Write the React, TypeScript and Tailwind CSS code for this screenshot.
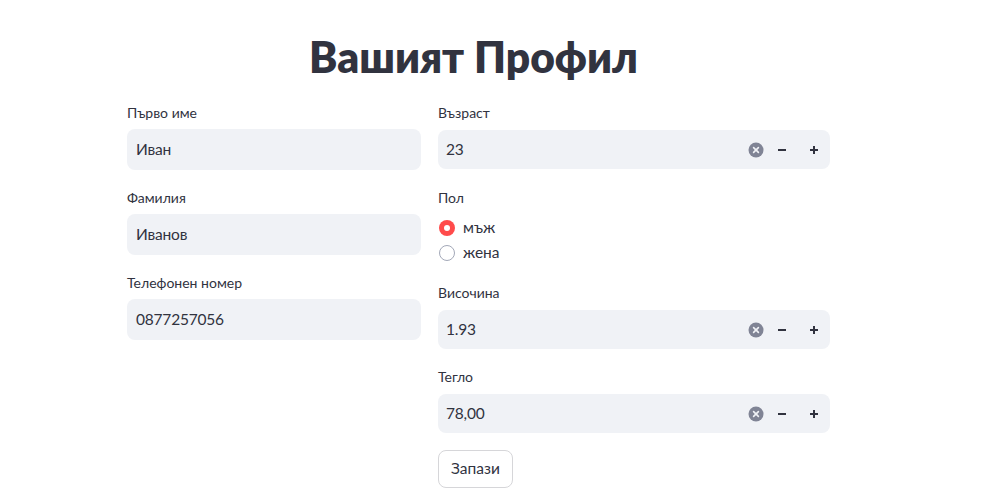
import React from 'react';

const font = { fontFamily: '"Source Sans Pro", Lato, "Noto Sans", sans-serif' };

function TextField({ label, value }: { label: string; value: string }) {
  return (
    <div className="mb-[16px]">
      <div className="text-[14px] leading-[20px] text-[#31333f] h-[26px]">{label}</div>
      <div className="h-[41px] rounded-[8px] bg-[#f0f2f6] flex items-center px-[9px] text-[15.5px] tracking-[-0.2px] text-[#31333f]">
        {value}
      </div>
    </div>
  );
}

function NumberField({ label, value }: { label: string; value: string }) {
  return (
    <div className="mb-[16px]">
      <div className="text-[14px] leading-[20px] text-[#31333f] h-[27px]">{label}</div>
      <div className="h-[39px] rounded-[8px] bg-[#f0f2f6] flex items-center pl-[8px] text-[15.5px] tracking-[-0.2px] text-[#31333f]">
        <span className="flex-1">{value}</span>
        <svg width="16" height="16" viewBox="0 0 16 16" className="mr-[2px]">
          <circle cx="8" cy="8" r="7.5" fill="#808495" />
          <path d="M5.6 5.6 L10.4 10.4 M10.4 5.6 L5.6 10.4" stroke="#f0f2f6" strokeWidth="1.6" strokeLinecap="round" />
        </svg>
        <div className="w-[32px] h-full flex items-center justify-center">
          <svg width="10" height="10" viewBox="0 0 10 10">
            <path d="M1 5 H9" stroke="#31333f" strokeWidth="2" />
          </svg>
        </div>
        <div className="w-[32px] h-full flex items-center justify-center">
          <svg width="10" height="10" viewBox="0 0 10 10">
            <path d="M1 5 H9 M5 1 V9" stroke="#31333f" strokeWidth="2" />
          </svg>
        </div>
      </div>
    </div>
  );
}

export default function App() {
  return (
    <div className="w-[991px] h-[497px] bg-white overflow-hidden" style={font}>
      <div className="pl-[127px] w-[830px]">
        <h1 className="text-center text-[42.5px] font-extrabold text-[#31333f] leading-[52px] pt-[31px] pb-[20px] pr-[10px]">
          Вашият Профил
        </h1>
      </div>
      <div className="flex gap-[17px] pl-[127px]">
        <div className="w-[294px]">
          <TextField label="Първо име" value="Иван" />
          <div className="h-[2px]" />
          <TextField label="Фамилия" value="Иванов" />
          <div className="h-[2px]" />
          <TextField label="Телефонен номер" value="0877257056" />
        </div>
        <div className="w-[392px]">
          <NumberField label="Възраст" value="23" />
          <div className="h-[3px]" />
          <div className="text-[14px] leading-[20px] text-[#31333f] h-[30px]">Пол</div>
          <div className="flex flex-col gap-[6px] text-[15.5px] text-[#31333f] pl-[1px]">
            <label className="flex items-center gap-[8px] h-[19px]">
              <span className="w-[16px] h-[16px] rounded-full bg-[#ff4b4b] flex items-center justify-center">
                <span className="w-[6px] h-[6px] rounded-full bg-white" />
              </span>
              мъж
            </label>
            <label className="flex items-center gap-[8px] h-[19px]">
              <span className="w-[16px] h-[16px] rounded-full border border-[#a3a8b8] bg-white" />
              жена
            </label>
          </div>
          <div className="h-[21px]" />
          <NumberField label="Височина" value="1.93" />
          <div className="h-[2px]" />
          <NumberField label="Тегло" value="78,00" />
          <button className="mt-[1px] h-[38px] px-[12px] rounded-[8px] border border-[#d6d6d9] bg-white text-[15.5px] text-[#31333f]">
            Запази
          </button>
        </div>
      </div>
    </div>
  );
}
